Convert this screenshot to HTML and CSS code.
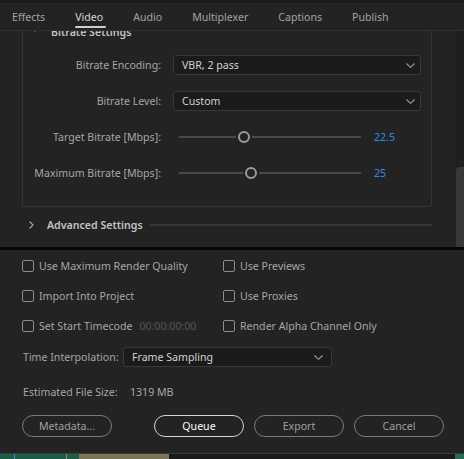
FILE: index.html
```html
<!DOCTYPE html>
<html lang="en">
<head>
    <meta charset="UTF-8">
    <title>Export Settings</title>
    <link rel="stylesheet" href="styles.css">
</head>
<body>
<div class="window">
    <div class="topline"></div>

    <!-- Tabs -->
    <div class="tabs">
        <span class="tab">Effects</span>
        <span class="tab active">Video</span>
        <span class="tab">Audio</span>
        <span class="tab">Multiplexer</span>
        <span class="tab">Captions</span>
        <span class="tab">Publish</span>
    </div>

    <!-- Scrolling settings area -->
    <div class="scroller">
        <div class="scroll-view">
            <div class="scroll-content">
                <div class="group">
                    <div class="group-head">
                        <svg class="chev-down" width="8" height="5" viewBox="0 0 8 5"><path d="M0.5 0.5 L4 4 L7.5 0.5" fill="none" stroke="#a0a0a0" stroke-width="1.2"/></svg>
                        <span class="group-title">Bitrate Settings</span>
                    </div>
                    <div class="row">
                        <span class="lbl">Bitrate Encoding:</span>
                        <div class="select">
                            <span>VBR, 2 pass</span>
                            <svg width="9" height="5" viewBox="0 0 9 5"><path d="M0.5 0.5 L4.5 4.3 L8.5 0.5" fill="none" stroke="#9c9c9c" stroke-width="1.1"/></svg>
                        </div>
                    </div>
                    <div class="row">
                        <span class="lbl">Bitrate Level:</span>
                        <div class="select">
                            <span>Custom</span>
                            <svg width="9" height="5" viewBox="0 0 9 5"><path d="M0.5 0.5 L4.5 4.3 L8.5 0.5" fill="none" stroke="#9c9c9c" stroke-width="1.1"/></svg>
                        </div>
                    </div>
                    <div class="row">
                        <span class="lbl">Target Bitrate [Mbps]:</span>
                        <div class="slider">
                            <div class="track"><span class="thumb" style="left: 35.7%"></span></div>
                        </div>
                        <span class="value">22.5</span>
                    </div>
                    <div class="row">
                        <span class="lbl">Maximum Bitrate [Mbps]:</span>
                        <div class="slider">
                            <div class="track"><span class="thumb" style="left: 39.6%"></span></div>
                        </div>
                        <span class="value">25</span>
                    </div>
                </div>

                <div class="section-head">
                    <svg class="chev-right" width="5" height="8" viewBox="0 0 5 8"><path d="M0.6 0.5 L4 4 L0.6 7.5" fill="none" stroke="#a8a8a8" stroke-width="1.1"/></svg>
                    <span class="group-title">Advanced Settings</span>
                    <span class="rule"></span>
                </div>
            </div>
        </div>
        <div class="scrollbar"><div class="scroll-thumb"></div></div>
    </div>

    <div class="divider"></div>

    <!-- Bottom options -->
    <div class="bottom">
        <div class="checks">
            <label class="check"><span class="box"></span>Use Maximum Render Quality</label>
            <label class="check"><span class="box"></span>Use Previews</label>
            <label class="check"><span class="box"></span>Import Into Project</label>
            <label class="check"><span class="box"></span>Use Proxies</label>
            <label class="check"><span class="box"></span>Set Start Timecode<span class="timecode">00:00:00:00</span></label>
            <label class="check"><span class="box"></span>Render Alpha Channel Only</label>
        </div>

        <div class="line-row interp">
            <span class="lbl2">Time Interpolation:</span>
            <div class="select wide">
                <span>Frame Sampling</span>
                <svg width="9" height="5" viewBox="0 0 9 5"><path d="M0.5 0.5 L4.5 4.3 L8.5 0.5" fill="none" stroke="#9c9c9c" stroke-width="1.1"/></svg>
            </div>
        </div>

        <div class="line-row size">
            <span class="lbl2">Estimated File Size:</span>
            <span class="size-val">1319 MB</span>
        </div>

        <div class="buttons">
            <button class="btn">Metadata...</button>
            <button class="btn primary">Queue</button>
            <button class="btn">Export</button>
            <button class="btn">Cancel</button>
        </div>
    </div>

    <!-- Timeline peeking in below -->
    <div class="timeline">
        <div class="clip green"><span class="mark blue"></span><span class="mark grey"></span></div>
        <div class="clip tan"></div>
        <div class="clip empty"></div>
        <div class="clip corner"></div>
    </div>
</div>
</body>
</html>
```

FILE: styles.css
```css
body {
    margin: 0;
    background: #232323;
    font-family: "Noto Sans", "Open Sans", sans-serif;
    font-size: 10.6px;
    color: #a6a6a6;
}
.window {
    width: 464px;
    height: 459px;
    overflow: hidden;
    background: #232323;
}
.topline {
    height: 3px;
    background: #1a1a1a;
    border-bottom: 1px solid #2a2a2a;
}

/* tabs */
.tabs {
    display: flex;
    gap: 30px;
    height: 26px;
    padding-left: 12px;
    border-bottom: 1px solid #303030;
}
.tab {
    position: relative;
    line-height: 27px;
    font-size: 10.6px;
    color: #a3a3a3;
}
.tab.active {
    color: #d6d6d6;
}
.tab.active::after {
    content: "";
    position: absolute;
    left: 0;
    right: -3px;
    bottom: 2px;
    height: 2px;
    border-radius: 1px;
    background: #cfcfcf;
}

/* scroll area */
.scroller {
    display: flex;
    height: 216px;
}
.scroll-view {
    flex: 1;
    overflow: hidden;
}
.scroll-content {
    margin-top: -20px;
}
.scrollbar {
    width: 8px;
    background: #1f1f1f;
    display: flex;
    flex-direction: column;
    justify-content: flex-end;
}
.scroll-thumb {
    height: 80px;
    background: #383838;
    border-radius: 4px 0 0 0;
}

.group {
    margin-left: 22px;
    width: 388px;
    padding: 10px 10px 23px;
    border: 1px solid #363636;
    border-radius: 2px;
}
.group-head {
    display: flex;
    align-items: center;
    height: 20px;
    margin-bottom: 13px;
}
.chev-down {
    margin: -5px 0 0 -2px;
}
.group-title {
    margin-left: 12px;
    font-size: 10.6px;
    font-weight: 600;
    color: #c4c4c4;
}
.row {
    display: flex;
    align-items: center;
    height: 20px;
    margin-bottom: 16px;
}
.row:last-child {
    margin-bottom: 0;
}
.lbl {
    width: 128px;
    text-align: right;
    margin-right: 12px;
    white-space: nowrap;
}
.select {
    flex: 1;
    height: 18px;
    display: flex;
    align-items: center;
    justify-content: space-between;
    padding: 0 5px 0 8px;
    background: #1b1b1b;
    border: 1px solid #383838;
    border-radius: 3px;
    color: #d2d2d2;
}
.slider {
    padding: 0 6px;
}
.track {
    position: relative;
    width: 182px;
    height: 2px;
    background: #4a4a4a;
}
.thumb {
    position: absolute;
    top: -5px;
    width: 8px;
    height: 8px;
    margin-left: -6px;
    border: 2px solid #9b9b9b;
    border-radius: 50%;
    background: #232323;
    box-shadow: 0 0 0 2px #232323;
}
.value {
    margin-left: 7px;
    color: #2d8ceb;
}

.section-head {
    display: flex;
    align-items: center;
    width: 403px;
    height: 20px;
    margin-top: 8px;
    padding-left: 29px;
}
.section-head .group-title {
    margin-left: 13px;
}
.rule {
    flex: 1;
    height: 2px;
    margin-left: 6px;
    background: #363636;
}

.divider {
    height: 3px;
    background: #060606;
}

/* bottom panel */
.bottom {
    height: 203px;
    padding-left: 22px;
}
.checks {
    display: grid;
    grid-template-columns: 201px auto;
    row-gap: 10px;
    padding-top: 6px;
}
.check {
    display: flex;
    align-items: center;
    height: 20px;
    white-space: nowrap;
}
.box {
    width: 10px;
    height: 10px;
    margin-right: 5px;
    border: 1.5px solid #8c8c8c;
    border-radius: 2px;
}
.timecode {
    margin-left: 7px;
    color: #555555;
}
.line-row {
    display: flex;
    align-items: center;
    height: 20px;
}
.interp {
    margin-top: 11px;
}
.size {
    margin-top: 15px;
}
.lbl2 {
    width: 100px;
    padding-left: 1px;
    white-space: nowrap;
}
.select.wide {
    flex: none;
    width: 191px;
    padding-right: 8px;
}
.size-val {
    margin-left: 7px;
}
.buttons {
    display: flex;
    margin-top: 13px;
}
.btn {
    width: 90px;
    height: 22px;
    margin-right: 10px;
    padding: 0;
    border: 1px solid #7a7a7a;
    border-radius: 11px;
    background: transparent;
    font-family: inherit;
    font-size: 10.6px;
    color: #a0a0a0;
}
.btn:first-child {
    margin-right: 42px;
}
.btn.primary {
    border-color: #d4d4d4;
    color: #ffffff;
}

/* timeline strip */
.timeline {
    display: flex;
    height: 5px;
    border-top: 1px solid #3c3c3c;
}
.clip.green {
    position: relative;
    width: 79px;
    background: #1c5d45;
}
.mark {
    position: absolute;
    top: 0;
    width: 1px;
    height: 5px;
}
.mark.blue {
    left: 14px;
    background: #3d8fd8;
}
.mark.grey {
    left: 66px;
    background: #8a8a8a;
}
.clip.tan {
    width: 90px;
    background: #7b7456;
}
.clip.empty {
    flex: 1;
    background: #1a1a1a;
}
.clip.corner {
    width: 9px;
    background: #2a6b4f;
}
```
